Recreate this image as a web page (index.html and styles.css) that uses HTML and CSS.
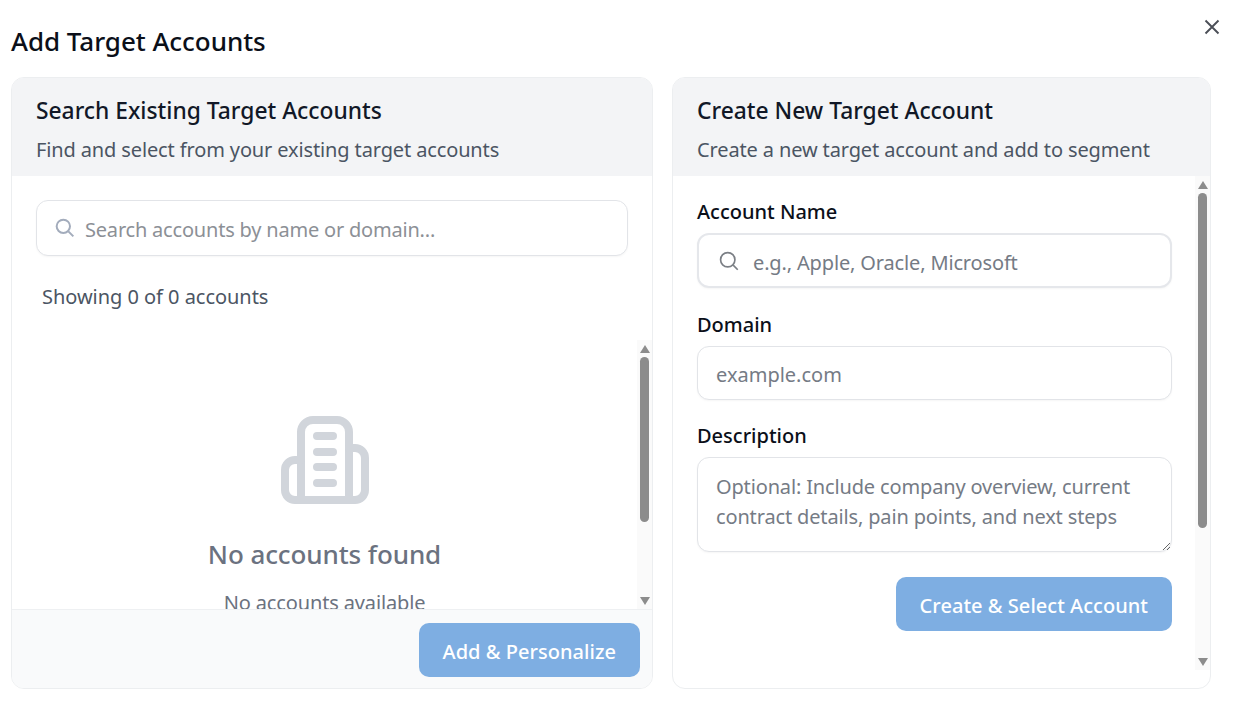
FILE: index.html
```html
<!DOCTYPE html>
<html lang="en">
<head>
<meta charset="utf-8">
<title>Add Target Accounts</title>
<link rel="stylesheet" href="styles.css">
</head>
<body>
<main class="modal">
  <button class="close" aria-label="Close">
    <svg viewBox="0 0 16 16" width="16" height="16"><path d="M1.5 1.5l13 13M14.5 1.5l-13 13"/></svg>
  </button>
  <h1 class="modal-title">Add Target Accounts</h1>
  <div class="columns">
    <section class="panel panel-left">
      <header class="panel-head">
        <h2>Search Existing Target Accounts</h2>
        <p>Find and select from your existing target accounts</p>
      </header>
      <div class="search-area">
        <div class="field-icon">
          <svg class="search-icon light" viewBox="0 0 24 24"><circle cx="10" cy="10" r="8"/><path d="M16 16l6 6"/></svg>
          <input class="input input-search" placeholder="Search accounts by name or domain...">
        </div>
        <p class="count">Showing 0 of 0 accounts</p>
      </div>
      <div class="scroll-wrap results">
        <div class="scroll-content">
          <div class="empty">
            <svg class="building" viewBox="0 0 88 88">
              <path d="M20 84V16A12 12 0 0 1 32 4H56A12 12 0 0 1 68 16V84"/>
              <path d="M20 44H14A10 10 0 0 0 4 54V74A10 10 0 0 0 14 84H74A10 10 0 0 0 84 74V42A10 10 0 0 0 74 32H68"/>
              <path d="M36 20H52M36 36H52M36 51H52M36 67H52"/>
            </svg>
            <h3>No accounts found</h3>
            <p>No accounts available</p>
          </div>
        </div>
        <div class="scrollbar">
          <span class="arrow arrow-up"></span>
          <span class="thumb thumb-results"></span>
          <span class="arrow arrow-down"></span>
        </div>
      </div>
      <footer class="panel-foot">
        <button class="primary">Add &amp; Personalize</button>
      </footer>
    </section>
    <section class="panel panel-right">
      <header class="panel-head">
        <h2>Create New Target Account</h2>
        <p>Create a new target account and add to segment</p>
      </header>
      <div class="scroll-wrap form">
        <div class="scroll-content form-inner">
          <label class="label">Account Name</label>
          <div class="field-icon field-name">
            <svg class="search-icon" viewBox="0 0 24 24"><circle cx="10.5" cy="10.5" r="8.6"/><path d="M17 17l5.5 5.5"/></svg>
            <input class="input input-name" placeholder="e.g., Apple, Oracle, Microsoft">
          </div>
          <label class="label">Domain</label>
          <input class="input input-plain" placeholder="example.com">
          <label class="label">Description</label>
          <textarea class="input textarea" placeholder="Optional: Include company overview, current contract details, pain points, and next steps"></textarea>
          <div class="form-actions">
            <button class="primary">Create &amp; Select Account</button>
          </div>
        </div>
        <div class="scrollbar">
          <span class="arrow arrow-up"></span>
          <span class="thumb thumb-form"></span>
          <span class="arrow arrow-down"></span>
        </div>
      </div>
    </section>
  </div>
</main>
</body>
</html>
```
FILE: styles.css
```css
* { box-sizing: border-box; }
html, body { margin: 0; height: 100%; }
body {
  background: #fff;
  font-family: "Noto Sans", sans-serif;
  color: #111827;
  overflow: hidden;
}
.modal { position: relative; height: 704px; padding: 23px 0 15px 11px; display: flex; flex-direction: column; }
.close {
  position: absolute; top: 18.5px; left: 1204px; width: 16px; height: 16px;
  padding: 0; border: 0; background: none; display: block;
}
.close svg { display: block; fill: none; stroke: #4b4f57; stroke-width: 1.9; }
.modal-title { margin: 0 0 17px; font-size: 26px; line-height: 37px; font-weight: 500; color: #0b0f19; letter-spacing: -0.05px; }
.columns { display: flex; gap: 19px; height: 612px; }
.panel {
  border: 1px solid #eceef0; border-radius: 13px; overflow: hidden;
  display: flex; flex-direction: column; background: #fff; flex: none;
}
.panel-left { width: 642px; }
.panel-right { width: 539px; padding-bottom: 18px; }
.panel-head { background: #f3f4f6; height: 98px; padding: 16px 24px 0; flex: none; }
.panel-head h2 { margin: 0; font-size: 22.8px; line-height: 34px; font-weight: 500; color: #111827; }
.panel-head p { margin: 7px 0 0; font-size: 20px; line-height: 30px; color: #4b5563; letter-spacing: -0.13px; }
.search-area { padding: 24px 24px 0; flex: none; height: 164px; }
.field-icon { position: relative; }
.field-name { padding-bottom: 1px; }
.search-icon {
  position: absolute; left: 22px; top: 18px; width: 20px; height: 20px;
  fill: none; stroke: #7b7f85; stroke-width: 2;
}
.search-icon.light { stroke: #a3acbc; stroke-width: 2.4; left: 19px; top: 18px; }
.input {
  display: block; width: 100%; font: inherit; font-size: 20px; color: #111827;
  background: #fff; border: 1px solid #e2e4e8; border-radius: 12px; outline: 0;
  box-shadow: 0 1px 2px rgba(0,0,0,.04);
}
.input::placeholder { color: #757b85; opacity: 1; letter-spacing: -0.15px; }
.input-search { height: 56px; padding: 2px 16px 0 48px; }
.input-search::placeholder { color: #8c9096; letter-spacing: -0.2px; }
.input-name { height: 55px; padding: 4px 16px 0 54px; border: 2px solid #e5e7eb; }
.input-plain { height: 54px; padding: 2px 18px 0; }
.input-plain::placeholder { letter-spacing: 0; }
.textarea { height: 95px; padding: 14px 18px 0; line-height: 30px; resize: vertical; }
.count { margin: 26px 0 0 6px; font-size: 20px; line-height: 30px; color: #4b5563; letter-spacing: -0.04px; }
.scroll-wrap { display: flex; flex: none; overflow: hidden; }
.scroll-content { flex: 1; min-width: 0; overflow: hidden; }
.scrollbar { flex: none; width: 15px; background: #fafafa; display: flex; flex-direction: column; align-items: center; }
.arrow { flex: none; width: 15px; height: 17px; display: flex; align-items: center; justify-content: center; }
.arrow::before { content: ""; display: block; width: 0; height: 0; border-left: 5px solid transparent; border-right: 5px solid transparent; }
.arrow-up::before { border-bottom: 8px solid #8c8c8c; }
.arrow-down { margin-top: auto; }
.arrow-down::before { border-top: 8px solid #8c8c8c; }
.thumb { flex: none; width: 9px; background: #8c8c8c; border-radius: 5px; }
.thumb-results { height: 165px; }
.thumb-form { height: 335px; }
.results { height: 269px; }
.empty { height: 383px; padding-top: 76px; text-align: center; }
.building { display: block; width: 88px; height: 88px; margin: 0 auto; fill: none; stroke: #d1d5db; stroke-width: 8; stroke-linecap: round; stroke-linejoin: round; }
.empty h3 { margin: 31px 0 0; font-size: 26px; line-height: 38px; font-weight: 500; color: #6b7280; letter-spacing: -0.1px; }
.empty p { margin: 15px 0 0; font-size: 20px; line-height: 30px; color: #6b7280; letter-spacing: -0.14px; }
.panel-foot {
  flex: 1; background: #f9fafb; border-top: 1px solid #eef0f2;
  display: flex; justify-content: flex-end; align-items: flex-start; padding: 13px 12px 0 0;
}
.primary {
  font: inherit; font-size: 20px; font-weight: 500; color: #fff; background: #7eaee2;
  border: 0; border-radius: 10px; height: 54px; padding: 2px 24px 0; letter-spacing: 0.03px;
}
.form { height: 494px; }
.form-inner { padding: 0 23px 0 24px; }
.label { display: block; margin: 21px 0 6px; font-size: 20px; line-height: 30px; font-weight: 500; color: #0b0f19; }
.form-actions { display: flex; justify-content: flex-end; margin-top: 25px; }
```
